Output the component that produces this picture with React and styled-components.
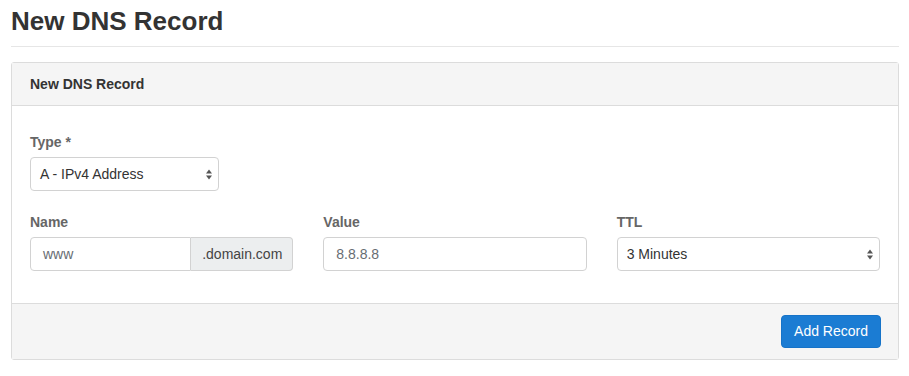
import React from "react";
import styled, { createGlobalStyle } from "styled-components";

const GlobalStyle = createGlobalStyle`
  body {
    margin: 0;
    background: #fff;
    font-family: "Liberation Sans", Arial, sans-serif;
    color: #333;
  }
`;

const Page = styled.div`
  padding: 0 10px 0 11px;
`;

const Title = styled.h1`
  margin: 8px 0 0;
  font-size: 26px;
  line-height: 27px;
  font-weight: bold;
  color: #333;
`;

const Rule = styled.hr`
  margin: 11px 0 15px;
  border: 0;
  border-top: 1px solid #e6e6e6;
`;

const Panel = styled.div`
  border: 1px solid #dcdcdc;
  border-radius: 3px;
  background: #fff;
`;

const PanelHeader = styled.div`
  padding: 13px 18px;
  background: #f5f5f5;
  border-bottom: 1px solid #dcdcdc;
  font-size: 14px;
  line-height: 16px;
  font-weight: bold;
  color: #333;
`;

const PanelBody = styled.div`
  padding: 26px 18px 32px;
`;

const PanelFooter = styled.div`
  display: flex;
  justify-content: flex-end;
  padding: 11px 17px 11px 18px;
  background: #f5f5f5;
  border-top: 1px solid #dcdcdc;
`;

const Row = styled.div`
  display: grid;
  grid-template-columns: repeat(3, 1fr);
  column-gap: 30px;
`;

const Field = styled.div`
  margin-bottom: ${(p) => (p.$last ? "0" : "21px")};
`;

const Label = styled.div`
  font-size: 14px;
  line-height: 20px;
  font-weight: bold;
  color: #666;
  margin-bottom: 5px;
`;

const Select = styled.div`
  display: flex;
  align-items: center;
  justify-content: space-between;
  box-sizing: border-box;
  width: ${(p) => p.$width || "100%"};
  height: 34px;
  padding: 0 6px 0 ${(p) => p.$pad || "9px"};
  border: 1px solid #d2d2d2;
  border-radius: 4px;
  background: #fff;
  font-size: 14px;
  color: #333;
`;

const InputGroup = styled.div`
  display: flex;
  height: 34px;
`;

const Input = styled.div`
  flex: 1;
  display: flex;
  align-items: center;
  box-sizing: border-box;
  height: 34px;
  padding: 0 12px;
  border: 1px solid #d2d2d2;
  border-radius: ${(p) => (p.$grouped ? "4px 0 0 4px" : "4px")};
  font-size: 14px;
  color: #676d73;
`;

const Addon = styled.div`
  display: flex;
  align-items: center;
  box-sizing: border-box;
  padding: 0 10px 0 11px;
  border: 1px solid #d2d2d2;
  border-left: 0;
  border-radius: 0 4px 4px 0;
  background: #eceeef;
  font-size: 14px;
  color: #444;
`;

const Button = styled.button`
  padding: 6px 12px;
  border: 1px solid #1673c8;
  border-radius: 4px;
  background: #1b7cd3;
  color: #fff;
  font-family: inherit;
  font-size: 14px;
  line-height: 19px;
`;

const Arrows = () => (
  <svg width="6" height="11" viewBox="0 0 6 11">
    <path d="M3 0.5 L6 4.5 H0 Z" fill="#555" />
    <path d="M3 10.5 L6 6.5 H0 Z" fill="#555" />
  </svg>
);

export default function App() {
  return (
    <Page>
      <GlobalStyle />
      <Title>New DNS Record</Title>
      <Rule />
      <Panel>
        <PanelHeader>New DNS Record</PanelHeader>
        <PanelBody>
          <Field>
            <Label>Type *</Label>
            <Select $width="189px">
              A - IPv4 Address
              <Arrows />
            </Select>
          </Field>
          <Row>
            <Field $last>
              <Label>Name</Label>
              <InputGroup>
                <Input $grouped>www</Input>
                <Addon>.domain.com</Addon>
              </InputGroup>
            </Field>
            <Field $last>
              <Label>Value</Label>
              <Input>8.8.8.8</Input>
            </Field>
            <Field $last>
              <Label>TTL</Label>
              <Select>
                3 Minutes
                <Arrows />
              </Select>
            </Field>
          </Row>
        </PanelBody>
        <PanelFooter>
          <Button>Add Record</Button>
        </PanelFooter>
      </Panel>
    </Page>
  );
}
